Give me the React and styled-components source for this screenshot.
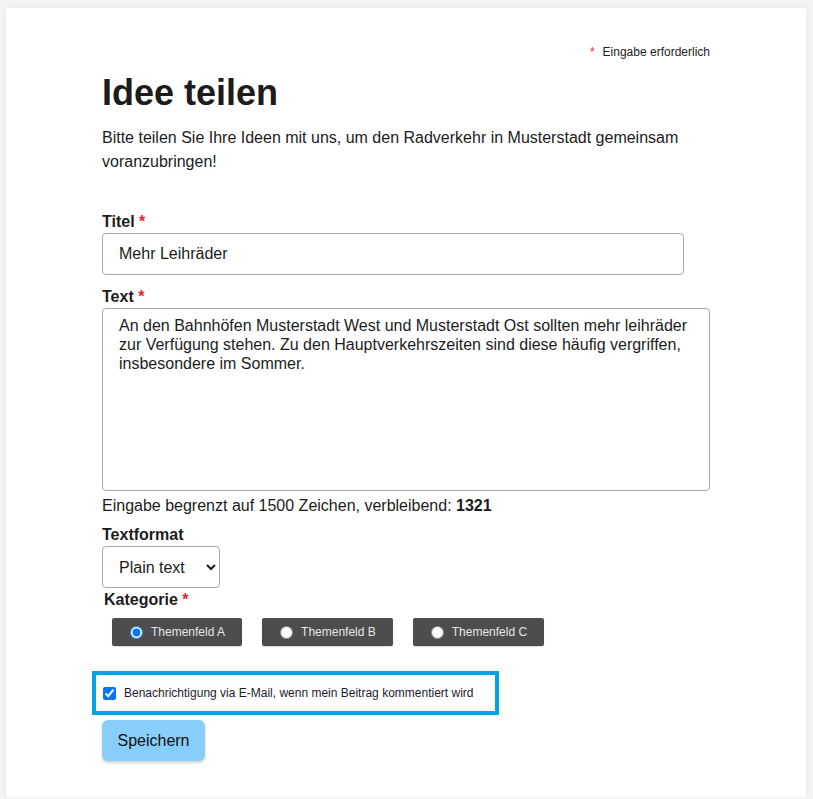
import React, { useState } from 'react'
import styled, { createGlobalStyle } from 'styled-components'

const GlobalStyle = createGlobalStyle`
  body {
    margin: 0;
    background: #f4f4f4;
    font-family: "Liberation Sans", Arial, sans-serif;
    color: #1c1c1c;
  }
`

const Card = styled.div`
  box-sizing: border-box;
  width: 800px;
  height: 789px;
  margin: 8px 0 0 6px;
  background: #fff;
  box-shadow: 0 0 5px rgba(0, 0, 0, 0.07);
  padding: 37px 96px 0 96px;
`

const Column = styled.div`
  width: 608px;
  display: flex;
  flex-direction: column;
`

const RequiredNote = styled.div`
  align-self: flex-end;
  font-size: 12px;
  line-height: 14px;
  color: #222;
`

const Star = styled.span`
  color: #e8202a;
  margin-right: ${p => (p.$gap ? '8px' : '0')};
`

const Heading = styled.h1`
  margin: 13px 0 0 0;
  font-size: 36px;
  line-height: 41px;
  font-weight: bold;
`

const Intro = styled.p`
  margin: 13px 0 0 0;
  font-size: 16px;
  line-height: 24px;
  width: 600px;
`

const Label = styled.label`
  display: block;
  font-size: 16px;
  line-height: 18px;
  font-weight: bold;
  margin: ${p => p.$top || '13px'} 0 2px ${p => p.$indent || '0'};
`

const TextInput = styled.input`
  box-sizing: border-box;
  width: 582px;
  height: 42px;
  padding: 0 16px;
  border: 1px solid #a8a8a8;
  border-radius: 4px;
  font-family: inherit;
  font-size: 16px;
  color: #1c1c1c;
  outline: none;
`

const TextArea = styled.textarea`
  box-sizing: border-box;
  width: 608px;
  height: 183px;
  padding: 7px 16px;
  border: 1px solid #a8a8a8;
  border-radius: 4px;
  font-family: inherit;
  font-size: 16px;
  line-height: 19px;
  color: #1c1c1c;
  resize: none;
  outline: none;
  display: block;
`

const Counter = styled.div`
  font-size: 16px;
  line-height: 18px;
  margin-top: 6px;
`

const Select = styled.select`
  box-sizing: border-box;
  width: 118px;
  height: 42px;
  padding: 0 6px 0 12px;
  border: 1px solid #a8a8a8;
  border-radius: 4px;
  background: #fff;
  font-family: inherit;
  font-size: 16px;
  color: #1c1c1c;
  outline: none;
`

const RadioRow = styled.div`
  display: flex;
  gap: 20px;
  margin: 7px 0 0 10px;
`

const RadioChip = styled.label`
  display: flex;
  align-items: center;
  gap: 8px;
  height: 28px;
  padding: 0 17px 0 18px;
  background: #4d4d4d;
  border-radius: 2px;
  color: #e6e6e6;
  font-size: 12px;
  cursor: pointer;
  box-shadow: 0 1px 1px rgba(0, 0, 0, 0.15);

  input {
    margin: 0;
    width: 13px;
    height: 13px;
  }
`

const NotifyBox = styled.label`
  box-sizing: border-box;
  display: flex;
  align-items: center;
  gap: 8px;
  width: 407px;
  height: 44px;
  margin: 25px 0 0 -10px;
  padding: 0 0 0 7px;
  border: 4px solid #00a3e3;
  font-size: 12px;
  color: #1c1c2c;

  input {
    margin: 0;
    width: 13px;
    height: 13px;
  }
`

const SaveButton = styled.button`
  align-self: flex-start;
  width: 103px;
  height: 41px;
  margin-top: 5px;
  border: none;
  border-radius: 6px;
  background: #87cefa;
  box-shadow: 0 2px 3px rgba(0, 0, 0, 0.18);
  font-family: inherit;
  font-size: 16px;
  color: #111;
  cursor: pointer;
`

const categories = ['Themenfeld A', 'Themenfeld B', 'Themenfeld C']

export default function App() {
  const [title, setTitle] = useState('Mehr Leihräder')
  const [text, setText] = useState(
    'An den Bahnhöfen Musterstadt West und Musterstadt Ost sollten mehr leihräder zur Verfügung stehen. Zu den Hauptverkehrszeiten sind diese häufig vergriffen, insbesondere im Sommer.'
  )
  const [cat, setCat] = useState(categories[0])
  const [notify, setNotify] = useState(true)

  return (
    <>
      <GlobalStyle />
      <Card>
        <Column>
          <RequiredNote>
            <Star $gap>*</Star>Eingabe erforderlich
          </RequiredNote>
          <Heading>Idee teilen</Heading>
          <Intro>
            Bitte teilen Sie Ihre Ideen mit uns, um den Radverkehr in Musterstadt gemeinsam voranzubringen!
          </Intro>

          <Label htmlFor="title" $top="39px">
            Titel <Star>*</Star>
          </Label>
          <TextInput id="title" value={title} onChange={e => setTitle(e.target.value)} />

          <Label htmlFor="text">
            Text <Star>*</Star>
          </Label>
          <TextArea id="text" value={text} onChange={e => setText(e.target.value)} />
          <Counter>
            Eingabe begrenzt auf 1500 Zeichen, verbleibend: <b>1321</b>
          </Counter>

          <Label htmlFor="format" $top="11px">Textformat</Label>
          <Select id="format" defaultValue="plain">
            <option value="plain">Plain text</option>
          </Select>

          <Label $top="3px" $indent="2px">
            Kategorie <Star>*</Star>
          </Label>
          <RadioRow>
            {categories.map(c => (
              <RadioChip key={c}>
                <input type="radio" name="cat" checked={cat === c} onChange={() => setCat(c)} />
                {c}
              </RadioChip>
            ))}
          </RadioRow>

          <NotifyBox>
            <input type="checkbox" checked={notify} onChange={e => setNotify(e.target.checked)} />
            Benachrichtigung via E-Mail, wenn mein Beitrag kommentiert wird
          </NotifyBox>

          <SaveButton>Speichern</SaveButton>
        </Column>
      </Card>
    </>
  )
}
